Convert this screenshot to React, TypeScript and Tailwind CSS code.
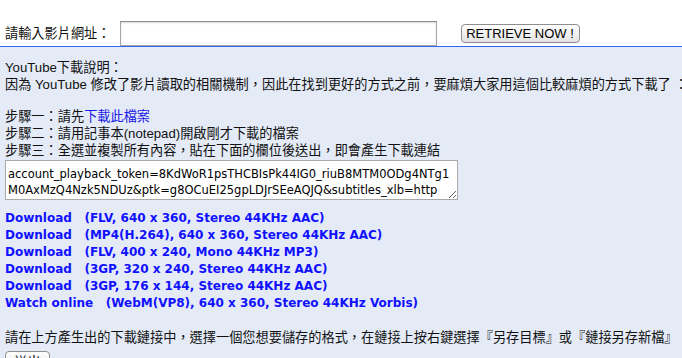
import React from 'react';

const bodyFont = "font-['Liberation_Sans','Noto_Sans_CJK_TC',sans-serif]";
const verdana = "font-['DejaVu_Sans','Noto_Sans_CJK_TC',sans-serif]";

const links = [
  { label: 'Download', info: '(FLV, 640 x 360, Stereo 44KHz AAC)' },
  { label: 'Download', info: '(MP4(H.264), 640 x 360, Stereo 44KHz AAC)' },
  { label: 'Download', info: '(FLV, 400 x 240, Mono 44KHz MP3)' },
  { label: 'Download', info: '(3GP, 320 x 240, Stereo 44KHz AAC)' },
  { label: 'Download', info: '(3GP, 176 x 144, Stereo 44KHz AAC)' },
  { label: 'Watch online', info: '(WebM(VP8), 640 x 360, Stereo 44KHz Vorbis)' },
];

const tokenText = [
  'account_playback_token=8KdWoR1psTHCBIsPk44IG0_riuB8MTM0ODg4NTg1',
  'M0AxMzQ4Nzk5NDUz&ptk=g8OCuEI25gpLDJrSEeAQJQ&subtitles_xlb=http',
  '%3A%2F%2Fwww.youtube.com%2Fapi%2Ftimedtext%3Ftype%3Dlist%26v%3D',
].join('\n');

const btn =
  'rounded-[4px] border border-[#8e8e8e] bg-linear-to-b from-white to-[#e3e3e3] text-[13px] text-black leading-none';

export default function App() {
  return (
    <div className={`w-[682px] h-[358px] overflow-hidden bg-[#e4ebf7] text-[#111] ${bodyFont}`}>
      {/* url bar */}
      <div className="flex items-center h-[46px] pt-[21px] px-[5px] bg-white">
        <span className="text-[13.2px] whitespace-nowrap">請輸入影片網址：</span>
        <input
          type="text"
          className="ml-[9px] w-[317px] h-[25px] border border-[#a6a6a6] border-t-[#8c8c8c] bg-white shadow-[inset_0_1px_2px_rgba(0,0,0,0.15)] outline-none"
        />
        <button className={`ml-[24px] w-[119px] h-[19px] ${btn} ${bodyFont}`}>RETRIEVE NOW !</button>
      </div>

      <div className="border-t border-[#3366f5] pt-[12px] px-[5px] text-[13.2px] leading-[17px] whitespace-nowrap">
        <div>YouTube下載說明：</div>
        <div>因為 YouTube 修改了影片讀取的相關機制，因此在找到更好的方式之前，要麻煩大家用這個比較麻煩的方式下載了 ：</div>
        <div className="h-[15px]" />
        <div>
          步驟一：請先<a className="text-[#1a1ae6]">下載此檔案</a>
        </div>
        <div>步驟二：請用記事本(notepad)開啟剛才下載的檔案</div>
        <div>步驟三：全選並複製所有內容，貼在下面的欄位後送出，即會產生下載連結</div>

        <textarea
          readOnly
          wrap="off"
          value={tokenText}
          className={`block mt-[1px] w-[453px] h-[40px] pt-[5px] px-[2px] pb-0 border border-[#a9a9a9] bg-white text-[11.5px] leading-[16px] text-black overflow-hidden outline-none ${verdana}`}
        />

        <div className={`mt-[10px] text-[12px] leading-[17px] font-bold text-[#1010ff] ${verdana}`}>
          {links.map((l, i) => (
            <div key={i} className="whitespace-pre">
              <a>{l.label}</a>
              {'   '}
              {l.info}
            </div>
          ))}
        </div>

        <div className="h-[17px]" />
        <div>請在上方產生出的下載鏈接中，選擇一個您想要儲存的格式，在鏈接上按右鍵選擇『另存目標』或『鏈接另存新檔』</div>
        <button className={`mt-[5px] w-[45px] h-[20px] ${btn} ${bodyFont}`}>送出</button>
      </div>
    </div>
  );
}
